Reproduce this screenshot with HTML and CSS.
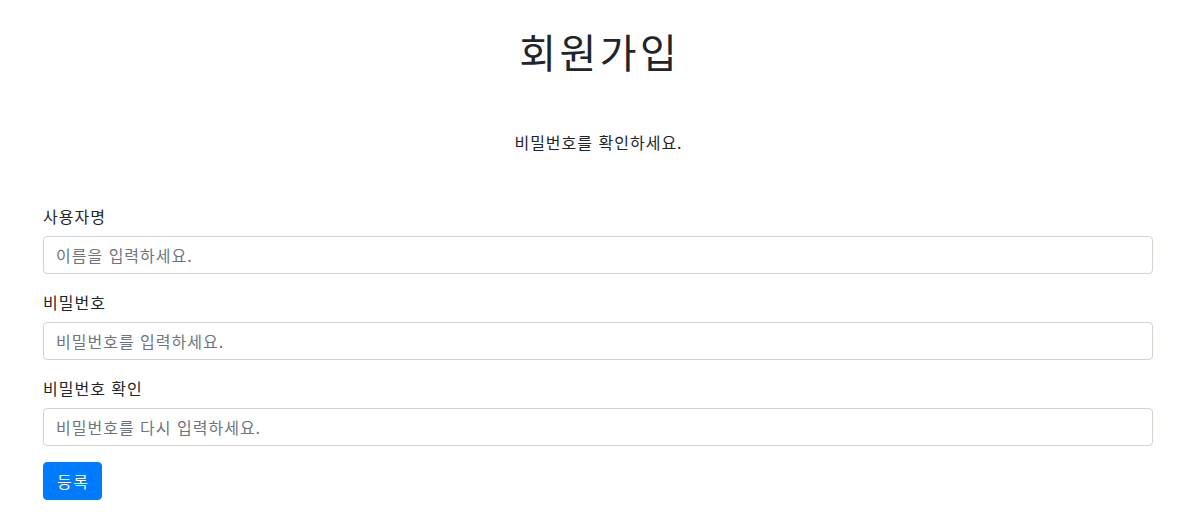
FILE: index.html
```html
<!DOCTYPE html>
<html lang="ko">
<head>
<meta charset="utf-8">
<title>회원가입</title>
<link rel="stylesheet" href="styles.css">
</head>
<body>
<div class="container">
  <h1 class="title">회원가입</h1>
  <p class="notice">비밀번호를 확인하세요.</p>
  <form class="form">
    <div class="form-group">
      <label class="label" for="u">사용자명</label>
      <input class="input" id="u" type="text" placeholder="이름을 입력하세요.">
    </div>
    <div class="form-group">
      <label class="label" for="p">비밀번호</label>
      <input class="input" id="p" type="password" placeholder="비밀번호를 입력하세요.">
    </div>
    <div class="form-group">
      <label class="label" for="p2">비밀번호 확인</label>
      <input class="input" id="p2" type="password" placeholder="비밀번호를 다시 입력하세요.">
    </div>
    <button class="btn" type="button">등록</button>
  </form>
</div>
</body>
</html>
```
FILE: styles.css
```css
* { box-sizing: border-box; }
body {
  margin: 0;
  font-family: "Noto Sans CJK KR", "Noto Sans", sans-serif;
  font-size: 16px;
  line-height: 1.5;
  color: #212529;
  background: #fff;
  letter-spacing: 1px;
}
.container {
  width: 1110px;
  margin-left: 43px;
  padding-top: 27px;
}
.title {
  margin: 0;
  text-align: center;
  font-size: 40px;
  font-weight: 400;
  line-height: 48px;
  letter-spacing: 3.5px;
  padding-left: 3.5px;
}
.notice {
  margin: 55px 0 0;
  text-align: center;
  line-height: 24px;
  padding-left: 1px;
}
.form {
  margin-top: 50px;
}
.form-group {
  margin-bottom: 16px;
}
.label {
  display: block;
  margin-bottom: 8px;
  line-height: 24px;
}
.input {
  display: block;
  width: 100%;
  height: 38px;
  padding: 6px 12px;
  font-family: inherit;
  font-size: 16px;
  line-height: 24px;
  letter-spacing: 1px;
  color: #495057;
  background: #fff;
  border: 1px solid #ced4da;
  border-radius: 4px;
  outline: none;
}
.input::placeholder { color: #6c757d; opacity: 1; }
.btn {
  display: inline-block;
  height: 38px;
  padding: 6px 12px 6px 13px;
  font-family: inherit;
  font-size: 16px;
  line-height: 24px;
  letter-spacing: 1.5px;
  color: #fff;
  background: #007bff;
  border: 1px solid #007bff;
  border-radius: 4px;
}
```
